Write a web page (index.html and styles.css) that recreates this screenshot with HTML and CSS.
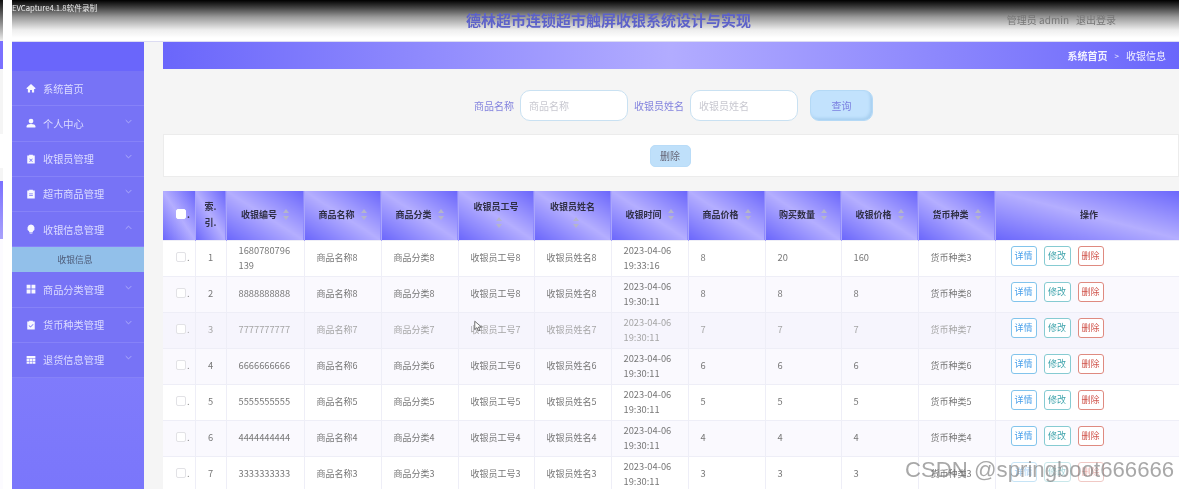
FILE: index.html
```html
<!DOCTYPE html>
<html lang="zh">
<head>
<meta charset="utf-8">
<title>收银信息</title>
<link rel="stylesheet" href="styles.css">
</head>
<body>
<div class="page">
  <div class="peek">
    <div class="peek-top"></div><div class="peek-bar"></div><div class="peek-gray"></div><div class="peek-white"></div><div class="peek-gray2"></div><div class="peek-head"></div><div class="peek-rows"></div>
  </div>
  <div class="app">
    <header class="topbar">
      <span class="rec">EVCapture4.1.8软件录制</span>
      <h1 class="title">德林超市连锁超市触屏收银系统设计与实现</h1>
      <div class="user"><span>管理员 admin</span><span>退出登录</span></div>
    </header>
    <div class="main">
      <nav class="side">
        <div class="side-top"></div>
        <a class="item"><svg class="ico" viewBox="0 0 16 16"><path d="M8 1.500 1 8v1.500h2V15h3.500v-4h3v4H13V9.500h2V8z"/></svg><span class="lbl">系统首页</span></a>
        <a class="item"><svg class="ico" viewBox="0 0 16 16"><circle cx="8" cy="4.800" r="3.800"/><path d="M1 15v-2c0-2.200 3-3.500 7-3.500s7 1.300 7 3.500v2z"/></svg><span class="lbl">个人中心</span><svg class="chev" viewBox="0 0 10 6"><path d="M1 1l4 4 4-4"/></svg></a>
        <a class="item"><svg class="ico" viewBox="0 0 16 16"><path fill-rule="evenodd" d="M2 2.500h3V1h6v1.500h3V15H2zM6 7l-.8.800L7.200 9.800 5.200 11.800l.8.800 2-2 2 2 .8-.8-2-2 2-2L10 7 8 9z"/></svg><span class="lbl">收银员管理</span><svg class="chev" viewBox="0 0 10 6"><path d="M1 1l4 4 4-4"/></svg></a>
        <a class="item"><svg class="ico" viewBox="0 0 16 16"><path fill-rule="evenodd" d="M2 2.500h3V1h6v1.500h3V15H2zM5 7v1.200h6V7zm0 3v1.200h6V10z"/></svg><span class="lbl">超市商品管理</span><svg class="chev" viewBox="0 0 10 6"><path d="M1 1l4 4 4-4"/></svg></a>
        <a class="item"><svg class="ico" viewBox="0 0 16 16"><path d="M8 .8a5.800 5.800 0 0 0-3 10.700V13h6v-1.500A5.800 5.800 0 0 0 8 .8zM5.800 14h4.400v1.200H5.800z"/></svg><span class="lbl">收银信息管理</span><svg class="chev" viewBox="0 0 10 6"><path d="M1 5l4-4 4 4"/></svg></a>
        <a class="subitem">收银信息</a>
        <a class="item"><svg class="ico" viewBox="0 0 16 16"><path d="M1 1h6.200v6.200H1zM8.800 1H15v6.200H8.800zM1 8.800h6.200V15H1zM8.800 8.800H15V15H8.800z"/></svg><span class="lbl">商品分类管理</span><svg class="chev" viewBox="0 0 10 6"><path d="M1 1l4 4 4-4"/></svg></a>
        <a class="item"><svg class="ico" viewBox="0 0 16 16"><path fill-rule="evenodd" d="M2 2.500h3V1h6v1.500h3V15H2zM11.200 6.500 7.200 10.500 5 8.300l-.8.800 3 3 4.800-4.800z"/></svg><span class="lbl">货币种类管理</span><svg class="chev" viewBox="0 0 10 6"><path d="M1 1l4 4 4-4"/></svg></a>
        <a class="item"><svg class="ico" viewBox="0 0 16 16"><path d="M1 1.500h14v3.500H1zM1 6h4.200v3.500H1zM5.900 6h4.200v3.500H5.900zM10.800 6H15v3.500h-4.200zM1 10.500h4.200V14H1zM5.900 10.500h4.200V14H5.900zM10.800 10.500H15V14h-4.200z"/></svg><span class="lbl">退货信息管理</span><svg class="chev" viewBox="0 0 10 6"><path d="M1 1l4 4 4-4"/></svg></a>
      </nav>
      <section class="content">
        <div class="crumb"><b>系统首页</b><span class="sep">&gt;</span><span>收银信息</span></div>
        <form class="search">
          <label class="s-label">商品名称</label>
          <input class="s-input" placeholder="商品名称">
          <label class="s-label s-gap">收银员姓名</label>
          <input class="s-input" placeholder="收银员姓名">
          <button type="button" class="s-btn">查询</button>
        </form>
        <div class="actions"><button type="button" class="del-btn">删除</button></div>
        <table class="grid">
          <colgroup>
            <col class="c-check"><col class="c-idx"><col class="c-a"><col class="c-b"><col class="c-b"><col class="c-c"><col class="c-b"><col class="c-b"><col class="c-b"><col class="c-c"><col class="c-b"><col class="c-b"><col class="c-op">
          </colgroup>
          <thead>
            <tr>
              <th class="chk"><span class="cb cb-head"></span>.</th>
              <th class="tc">索.<br>引.</th>
              <th>收银编号<i class="sort"></i></th>
              <th>商品名称<i class="sort"></i></th>
              <th>商品分类<i class="sort"></i></th>
              <th>收银员工号<i class="sort"></i></th>
              <th>收银员姓名<i class="sort"></i></th>
              <th>收银时间<i class="sort"></i></th>
              <th>商品价格<i class="sort"></i></th>
              <th>购买数量<i class="sort"></i></th>
              <th>收银价格<i class="sort"></i></th>
              <th>货币种类<i class="sort"></i></th>
              <th>操作</th>
            </tr>
          </thead>
          <tbody>
            <tr><td class="chk"><span class="cb"></span>.</td><td class="tc">1</td><td>1680780796<br>139</td><td>商品名称8</td><td>商品分类8</td><td>收银员工号8</td><td>收银员姓名8</td><td>2023-04-06<br>19:33:16</td><td>8</td><td>20</td><td>160</td><td>货币种类3</td><td class="ops"><a class="op op-d">详情</a><a class="op op-e">修改</a><a class="op op-x">删除</a></td></tr>
            <tr><td class="chk"><span class="cb"></span>.</td><td class="tc">2</td><td>8888888888</td><td>商品名称8</td><td>商品分类8</td><td>收银员工号8</td><td>收银员姓名8</td><td>2023-04-06<br>19:30:11</td><td>8</td><td>8</td><td>8</td><td>货币种类8</td><td class="ops"><a class="op op-d">详情</a><a class="op op-e">修改</a><a class="op op-x">删除</a></td></tr>
            <tr class="hover"><td class="chk"><span class="cb"></span>.</td><td class="tc">3</td><td>7777777777</td><td>商品名称7</td><td>商品分类7</td><td>收银员工号7</td><td>收银员姓名7</td><td>2023-04-06<br>19:30:11</td><td>7</td><td>7</td><td>7</td><td>货币种类7</td><td class="ops"><a class="op op-d">详情</a><a class="op op-e">修改</a><a class="op op-x">删除</a></td></tr>
            <tr><td class="chk"><span class="cb"></span>.</td><td class="tc">4</td><td>6666666666</td><td>商品名称6</td><td>商品分类6</td><td>收银员工号6</td><td>收银员姓名6</td><td>2023-04-06<br>19:30:11</td><td>6</td><td>6</td><td>6</td><td>货币种类6</td><td class="ops"><a class="op op-d">详情</a><a class="op op-e">修改</a><a class="op op-x">删除</a></td></tr>
            <tr><td class="chk"><span class="cb"></span>.</td><td class="tc">5</td><td>5555555555</td><td>商品名称5</td><td>商品分类5</td><td>收银员工号5</td><td>收银员姓名5</td><td>2023-04-06<br>19:30:11</td><td>5</td><td>5</td><td>5</td><td>货币种类5</td><td class="ops"><a class="op op-d">详情</a><a class="op op-e">修改</a><a class="op op-x">删除</a></td></tr>
            <tr><td class="chk"><span class="cb"></span>.</td><td class="tc">6</td><td>4444444444</td><td>商品名称4</td><td>商品分类4</td><td>收银员工号4</td><td>收银员姓名4</td><td>2023-04-06<br>19:30:11</td><td>4</td><td>4</td><td>4</td><td>货币种类4</td><td class="ops"><a class="op op-d">详情</a><a class="op op-e">修改</a><a class="op op-x">删除</a></td></tr>
            <tr class="last"><td class="chk"><span class="cb"></span>.</td><td class="tc">7</td><td>3333333333</td><td>商品名称3</td><td>商品分类3</td><td>收银员工号3</td><td>收银员姓名3</td><td>2023-04-06<br>19:30:11</td><td>3</td><td>3</td><td>3</td><td>货币种类3</td><td class="ops"><a class="op op-d">详情</a><a class="op op-e">修改</a><a class="op op-x">删除</a></td></tr>
          </tbody>
        </table>
      </section>
    </div>
  </div>
  <svg class="cursor" viewBox="0 0 12 16"><path d="M1 1v11l3-2.500 2 4.500 2-1-2-4.300h4z"/></svg>
  <div class="mark">CSDN @springboot666666</div>
</div>
</body>
</html>
```
FILE: styles.css
```css
* { box-sizing: border-box; }
html, body { margin: 0; padding: 0; height: 100%; background: #fff; overflow: hidden; }
body { font-family: "Noto Sans CJK SC", "Noto Sans", sans-serif; font-size: 9.500px; color: #777; }
a { text-decoration: none; }

.page { position: relative; display: flex; width: 1179px; height: 489px; overflow: hidden; filter: blur(0.55px); }

.peek { flex: none; width: 3px; margin-right: 9px; display: flex; flex-direction: column; }
.peek-top { height: 41px; background: linear-gradient(#111, #eee); }
.peek-bar { height: 28px; background: #7a70ff; }
.peek-gray { height: 65px; background: #f5f5f5; }
.peek-white { height: 34px; background: #fff; }
.peek-gray2 { height: 13px; background: #f5f5f5; }
.peek-head { height: 58px; background: linear-gradient(#7a70ff, #a9a2fb); }
.peek-rows { flex: 1; background: #fcfbff; }

.app { flex: 1; min-width: 0; display: flex; flex-direction: column; }

.topbar { position: relative; flex: none; height: 42px; display: flex; align-items: center; justify-content: center; background: linear-gradient(#000 0, #333 6px, #999 17px, #eee 30px, #fff 38px); border-bottom: 1px solid #dcdcf2; }
.rec { position: absolute; left: 0; top: 2px; font-size: 7.700px; line-height: 12px; color: #eee; }
.title { margin: -2px 0 0 26px; font-size: 15px; line-height: 20px; font-weight: 700; color: #5d62c9; }
.user { position: absolute; right: 63px; top: 13px; display: flex; gap: 7px; font-size: 10px; line-height: 14px; color: #777; }

.main { flex: 1; min-height: 0; display: flex; }

.side { flex: none; width: 132px; background: linear-gradient(#8f8afd, #7a76fb); }
.side-top { height: 29px; background: #6a66fb; }
.item { display: flex; align-items: center; height: 35.250px; padding: 0 12px 0 14px; background: #7773f6; border-bottom: 1px solid #8682f8; color: #dcdcff; font-size: 10.200px; }
.ico { flex: none; width: 10px; height: 10px; margin-right: 7px; fill: #f7f7ff; }
.lbl { flex: 1; }
.chev { flex: none; width: 7px; height: 5px; margin-top: -4px; fill: none; stroke: #b8b6fb; stroke-width: 1.200; }
.subitem { display: flex; align-items: center; justify-content: center; height: 25px; padding-right: 6px; background: #92c0ea; color: #4d5a77; font-size: 8.750px; }

.content { flex: 1; min-width: 0; padding-left: 19px; background: #f5f5f5; }
.crumb { display: flex; align-items: center; justify-content: flex-end; height: 27px; padding-right: 13px; background: linear-gradient(85deg, #6a66fb, #b2acff 50%, #6a66fb); color: #f2f2ff; font-size: 10px; }
.crumb b { font-family: "Noto Sans CJK SC", serif; }
.sep { margin: 0 7px; font-size: 8px; }

.search { display: flex; align-items: center; justify-content: center; height: 31px; margin-top: 21px; padding-left: 5px; }
.s-label { font-size: 10px; color: #8383de; margin-right: 6px; }
.s-gap { margin-left: 6px; }
.s-input { width: 108px; height: 31px; padding: 0 8px; border: 1px solid #c9e1f2; border-radius: 10px; background: #fff; font: inherit; font-size: 10px; outline: none; }
.s-input::placeholder { color: #c8c8d0; }
.s-btn { width: 63px; height: 31px; margin-left: 12px; border: 1px solid #b4d9f6; border-radius: 9px; background: #c2e2fd; box-shadow: inset -2px -2px 3px #a9d0f0; color: #7b80e0; font: inherit; font-size: 10px; }

.actions { display: flex; align-items: center; justify-content: center; height: 43px; margin-top: 13px; padding-right: 2px; background: #fff; border: 1px solid #ececec; }
.del-btn { width: 41px; height: 22px; padding: 0; border: 1px solid #b9dcf8; border-radius: 5px; background: #bfe0fa; color: #667; font: inherit; font-size: 10px; }

.grid { width: 1020px; margin-top: 14px; border-collapse: collapse; table-layout: fixed; background: #fff; }
.c-check { width: 32px; }
.c-idx { width: 31px; }
.c-a { width: 78px; }
.c-b { width: 77px; }
.c-c { width: 76px; }
.c-op { width: 188px; }

.grid th { height: 49px; padding: 0 13px; border-right: 1px solid #a9a5fb; background: linear-gradient(to top right, #6a66fb, #b4aeff 50%, #6a66fb); color: #2f2f45; font-size: 9px; font-weight: 700; line-height: 16px; text-align: center; }
.grid td { height: 36px; padding: 0 12px; border: 1px solid #eeeef7; border-left: 0; color: #777; line-height: 15.500px; font-size: 9.300px; white-space: nowrap; }
.grid tbody tr:nth-child(even) td { background: #faf9fe; }
.grid tr.hover td { background: #f6f5fd; color: #a6a6a6; }
.grid td:nth-child(n+4):nth-child(-n+7), .grid td:nth-child(12) { font-size: 9px; }
.grid th.tc, .grid td.tc { padding: 0; text-align: center; }
.grid th.chk, .grid td.chk { padding: 0 0 0 13px; text-align: left; white-space: nowrap; }

.cb { display: inline-block; width: 10px; height: 10px; margin-right: 1px; vertical-align: -1px; border: 1px solid #e2e2e6; border-radius: 2px; background: #fff; }
.cb-head { border-color: #fff; }

.sort { display: inline-block; position: relative; width: 6px; height: 11px; margin-left: 6px; vertical-align: -2px; }
.sort::before, .sort::after { content: ""; position: absolute; left: 0; border-left: 3px solid transparent; border-right: 3px solid transparent; }
.sort::before { top: 0; border-bottom: 4px solid #b4b4cc; }
.sort::after { bottom: 0; border-top: 4px solid #b4b4cc; }

.grid td.ops { padding: 0 0 0 15px; }
.op { display: inline-block; height: 20px; margin: -4px 7px 0 0; border: 1px solid; border-radius: 3px; background: #fff; font-size: 9px; line-height: 17px; text-align: center; vertical-align: middle; }
.op-d { width: 26px; border-color: #82c4ec; color: #4aa0ea; }
.op-e { width: 27px; border-color: #86cbd2; color: #3fa4ac; }
.op-x { width: 26px; margin-right: 0; border-color: #df8a80; color: #d0554c; }
.last .op { opacity: .45; }

.cursor { position: absolute; left: 474px; top: 320px; width: 9px; height: 13px; fill: #fff; stroke: #444; stroke-width: 1; }
.mark { position: absolute; left: 905px; top: 455px; font-family: "Liberation Sans", sans-serif; font-size: 22.200px; line-height: 30px; color: rgba(110, 110, 110, .6); white-space: nowrap; }
```
